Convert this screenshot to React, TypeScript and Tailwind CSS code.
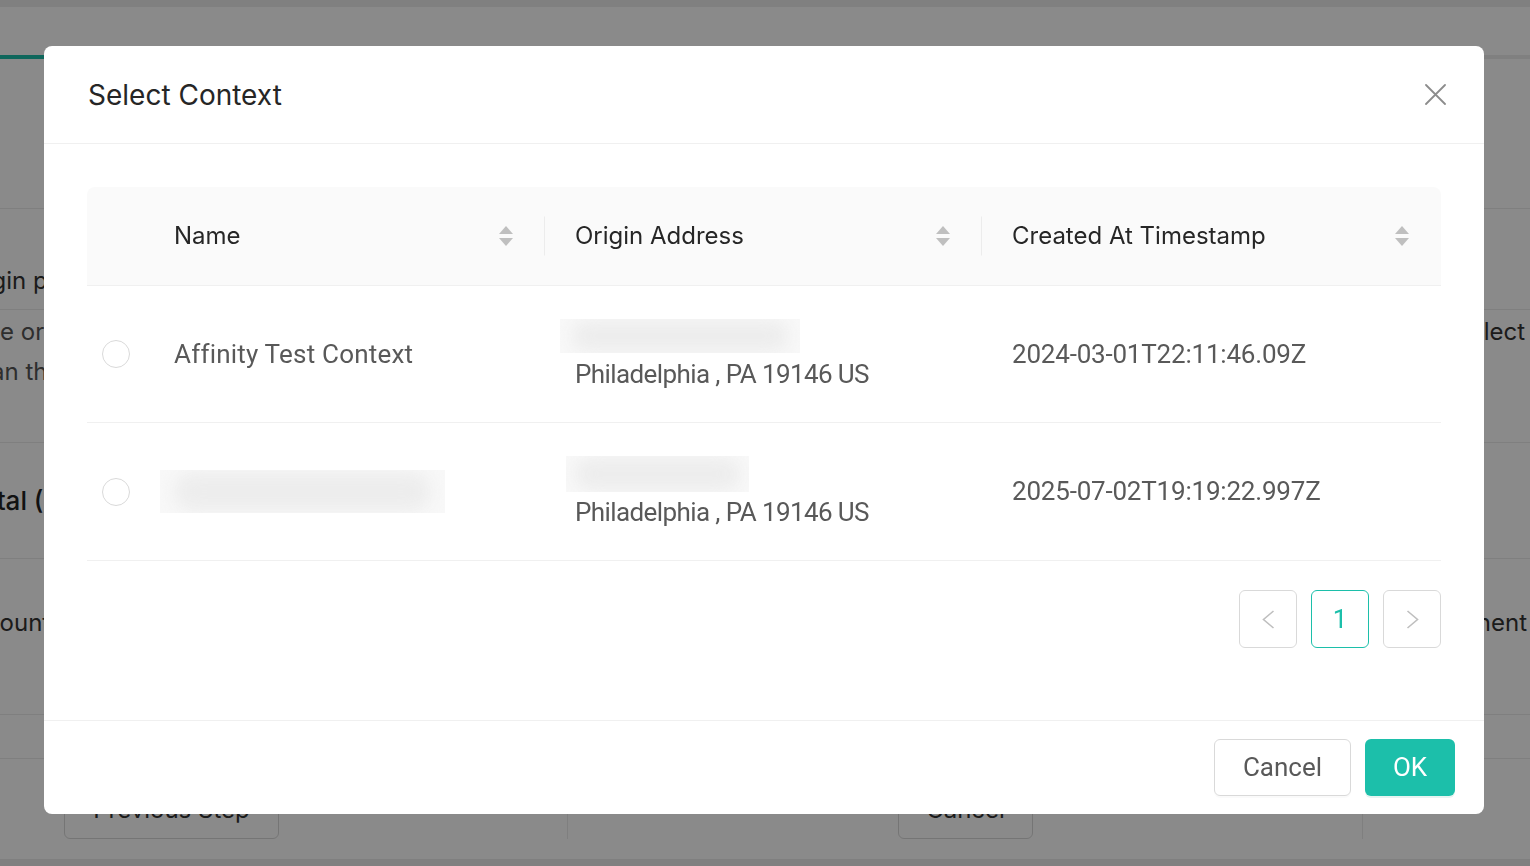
import React from "react";

const inter = { fontFamily: "Inter, 'Noto Sans', sans-serif" };
const roboto = { fontFamily: "Roboto, 'Liberation Sans', sans-serif" };

function Sorter() {
  return (
    <span className="flex flex-col items-center gap-[4px]">
      <svg width="14" height="8" viewBox="0 0 14 8">
        <path d="M7 0 L14 8 H0 Z" fill="#bfbfbf" />
      </svg>
      <svg width="14" height="8" viewBox="0 0 14 8">
        <path d="M0 0 H14 L7 8 Z" fill="#bfbfbf" />
      </svg>
    </span>
  );
}

function HeadCell({ label, sep }: { label: string; sep?: boolean }) {
  return (
    <div className="relative flex items-center justify-between pl-[30px] pr-[32px]">
      <span className="text-[24px] text-[#262626]" style={inter}>
        {label}
      </span>
      <Sorter />
      {sep && (
        <span className="absolute right-0 top-1/2 h-[39px] w-px -translate-y-1/2 bg-[#ececec]" />
      )}
    </div>
  );
}

function Radio() {
  return (
    <div className="flex items-center pl-[15px]">
      <span className="h-[28px] w-[28px] rounded-full border border-[#d9d9d9] bg-white" />
    </div>
  );
}

function Blur({ w, h, ml }: { w: string; h: string; ml: string }) {
  return (
    <div className={`${w} ${h} ${ml} overflow-hidden bg-[#f8f8f8]`}>
      <div className="h-full w-full scale-90 rounded-full bg-[#ededed] blur-[8px]" />
    </div>
  );
}

function Background() {
  return (
    <div className="flex h-[866px] flex-col overflow-hidden bg-white" style={inter}>
      <div className="h-[7px] shrink-0 bg-[#ededed]" />
      <div className="h-[48px] shrink-0" />
      <div className="flex h-[4px] shrink-0">
        <div className="w-[300px] bg-[#1cbfaa]" />
        <div className="flex-1 bg-[#ededed]" />
      </div>
      <div className="h-[150px] shrink-0 border-b border-[#ebebeb]" />
      <div className="flex h-[101px] shrink-0 items-center border-b border-[#ebebeb] text-[24px] text-[#333]">
        <span className="-ml-[42px] whitespace-nowrap pt-[44px]">Origin place</span>
      </div>
      <div className="flex h-[133px] shrink-0 border-b border-[#ebebeb] text-[24px] text-[#555]">
        <div className="flex flex-col gap-[4px] pt-[4px]">
          <span className="-ml-[22px] whitespace-nowrap">the origin</span>
          <span className="-ml-[31px] whitespace-nowrap">than that</span>
        </div>
        <div className="flex-1" />
        <span className="mr-[5px] whitespace-nowrap pt-[4px] text-[#333]">Select</span>
      </div>
      <div className="flex h-[116px] shrink-0 items-center border-b border-[#ebebeb] text-[26px] text-[#222]">
        <span className="-ml-[34px] whitespace-nowrap font-medium">Total (USD)</span>
      </div>
      <div className="flex h-[156px] shrink-0 items-center border-b border-[#ebebeb] pb-[28px] text-[24px] text-[#333]">
        <span className="-ml-[38px] whitespace-nowrap">Amount</span>
        <div className="flex-1" />
        <span className="mr-[3px] whitespace-nowrap">Component</span>
      </div>
      <div className="h-[44px] shrink-0 border-b border-[#ebebeb]" />
      <div className="flex h-[101px] shrink-0 items-start border-b border-[#ebebeb]">
        <div className="flex h-[80px] w-[568px] items-end border-r border-[#ebebeb] pl-[64px]">
          <span className="flex h-[58px] w-[215px] items-center justify-center rounded-[6px] border border-[#d9d9d9] text-[24px] text-[#333]">
            Previous Step
          </span>
        </div>
        <div className="flex h-[80px] w-[795px] items-end border-r border-[#ebebeb] pl-[330px]">
          <span className="flex h-[58px] w-[135px] items-center justify-center rounded-[6px] border border-[#d9d9d9] text-[24px] text-[#333]">
            Cancel
          </span>
        </div>
      </div>
      <div className="flex-1 bg-[#ededed]" />
    </div>
  );
}

export default function App() {
  const cols = "grid grid-cols-[57px_401px_437px_459px]";
  return (
    <div className="relative h-[866px] w-full overflow-hidden">
      <Background />
      <div className="fixed inset-0 flex justify-center bg-[rgba(0,0,0,0.46)] pt-[46px]">
        <div className="ml-[-2px] flex h-[768px] w-[1440px] flex-col rounded-[8px] bg-white">
          <div className="flex h-[98px] shrink-0 items-center justify-between border-b border-[#f0f0f0] pl-[44px] pr-[38px]">
            <span className="text-[28px] text-[#262626]" style={inter}>
              Select Context
            </span>
            <svg width="21" height="21" viewBox="0 0 21 21">
              <path d="M1 1 L20 20 M20 1 L1 20" stroke="#8c8c8c" strokeWidth="1.8" strokeLinecap="round" />
            </svg>
          </div>
          <div className="flex flex-col px-[43px] pt-[43px]">
            <div className={`${cols} h-[99px] rounded-t-[8px] border-b border-[#f0f0f0] bg-[#fafafa]`}>
              <div />
              <HeadCell label="Name" sep />
              <HeadCell label="Origin Address" sep />
              <HeadCell label="Created At Timestamp" />
            </div>
            <div className={`${cols} h-[137px] border-b border-[#f0f0f0] text-[26px] text-[#595959]`} style={roboto}>
              <Radio />
              <div className="flex items-center pl-[30px] tracking-[0.2px]">Affinity Test Context</div>
              <div className="flex flex-col justify-center pl-[30px]">
                <Blur w="w-[240px]" h="h-[34px]" ml="-ml-[15px]" />
                <span className="mt-[6px] leading-[30px] tracking-[-0.6px]">Philadelphia , PA 19146 US</span>
              </div>
              <div className="flex items-center pl-[30px] tracking-[-0.2px]">2024-03-01T22:11:46.09Z</div>
            </div>
            <div className={`${cols} h-[138px] border-b border-[#f0f0f0] text-[26px] text-[#595959]`} style={roboto}>
              <Radio />
              <div className="flex items-center pl-[16px]">
                <Blur w="w-[285px]" h="h-[43px]" ml="ml-0" />
              </div>
              <div className="flex flex-col justify-center pl-[30px]">
                <Blur w="w-[183px]" h="h-[36px]" ml="-ml-[9px]" />
                <span className="mt-[5px] leading-[30px] tracking-[-0.6px]">Philadelphia , PA 19146 US</span>
              </div>
              <div className="flex items-center pl-[30px] tracking-[-0.2px]">2025-07-02T19:19:22.997Z</div>
            </div>
            <div className="mt-[29px] flex justify-end gap-[14px]">
              <span className="flex h-[58px] w-[58px] items-center justify-center rounded-[6px] border border-[#d9d9d9]">
                <svg width="13" height="19" viewBox="0 0 13 19">
                  <path d="M11.5 1 L1.5 9.5 L11.5 18" fill="none" stroke="#bfbfbf" strokeWidth="1.6" />
                </svg>
              </span>
              <span
                className="flex h-[58px] w-[58px] items-center justify-center rounded-[6px] border border-[#1cbfaa] text-[26px] text-[#1cbfaa]"
                style={roboto}
              >
                1
              </span>
              <span className="flex h-[58px] w-[58px] items-center justify-center rounded-[6px] border border-[#d9d9d9]">
                <svg width="13" height="19" viewBox="0 0 13 19">
                  <path d="M1.5 1 L11.5 9.5 L1.5 18" fill="none" stroke="#bfbfbf" strokeWidth="1.6" />
                </svg>
              </span>
            </div>
          </div>
          <div className="flex-1" />
          <div className="flex h-[94px] shrink-0 items-center justify-end gap-[14px] border-t border-[#f0f0f0] pr-[29px]" style={roboto}>
            <button className="h-[57px] w-[137px] rounded-[6px] border border-[#d9d9d9] bg-white text-[26px] text-[#595959] shadow-[0_2px_0_rgba(0,0,0,0.02)]">
              Cancel
            </button>
            <button className="h-[57px] w-[90px] rounded-[6px] bg-[#1cbfaa] text-[26px] text-white shadow-[0_2px_0_rgba(5,145,120,0.1)]">
              OK
            </button>
          </div>
        </div>
      </div>
    </div>
  );
}
